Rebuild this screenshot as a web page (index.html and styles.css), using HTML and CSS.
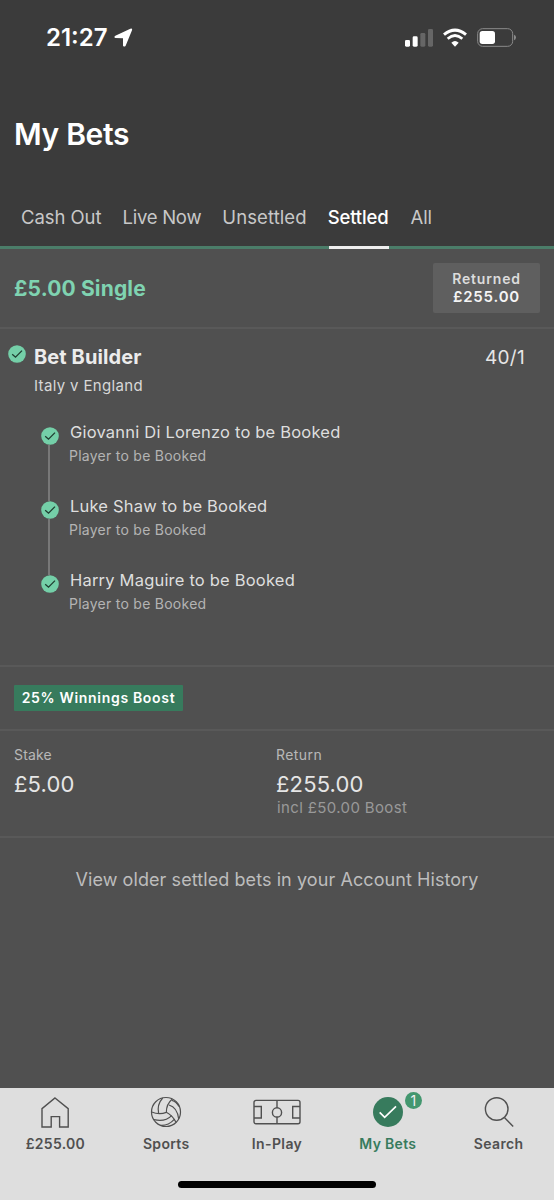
FILE: index.html
```html
<!DOCTYPE html>
<html lang="en">
<head>
    <meta charset="UTF-8">
    <meta name="viewport" content="width=device-width, initial-scale=1.0">
    <title>My Bets</title>
    <link rel="stylesheet" href="styles.css">
</head>
<body>
    <svg class="defs" width="0" height="0">
        <symbol id="check" viewBox="0 0 18 18">
            <circle cx="9" cy="9" r="8.8" fill="#74cfa8"/>
            <path d="M4.2 9.2 L7.5 12.2 L14 5.6" fill="none" stroke="#1f3d30" stroke-width="1.3"/>
        </symbol>
    </svg>

    <header class="header">
        <div class="status-bar">
            <span class="time">21:27</span>
            <svg class="location" width="19" height="19" viewBox="0 0 57 57">
                <path d="M4 23 L49 2 Q56 0 54 7 L35 53 Q31 58 27 53 L27 31 L4 30 Q-2 27 4 23 Z" fill="#fff"/>
            </svg>
            <div class="status-icons">
                <svg width="28" height="19" viewBox="0 0 84 57">
                    <rect x="0" y="36" width="15" height="20" rx="4" fill="#fff"/>
                    <rect x="23" y="25" width="15" height="31" rx="4" fill="#fff"/>
                    <rect x="46" y="15" width="15" height="41" rx="4" fill="#666"/>
                    <rect x="69" y="3" width="15" height="53" rx="4" fill="#666"/>
                </svg>
                <svg width="24" height="19" viewBox="0 0 72 57">
                    <path d="M3 20 Q36 -7 69 20" fill="none" stroke="#fff" stroke-width="9"/>
                    <path d="M14 32 Q36 13 58 32" fill="none" stroke="#fff" stroke-width="8"/>
                    <path d="M25 44 Q36 34 47 44 L36 56 Z" fill="#fff"/>
                </svg>
                <svg width="39" height="19" viewBox="0 0 117 57">
                    <rect x="2" y="2" width="105" height="53" rx="15" fill="none" stroke="#8a8a8a" stroke-width="3"/>
                    <rect x="8" y="9" width="46" height="39" rx="8" fill="#fff"/>
                    <path d="M111 20 Q117 22 117 28 Q117 35 111 37 Z" fill="#8a8a8a"/>
                </svg>
            </div>
        </div>
        <h1>My Bets</h1>
        <nav class="tabs">
            <a class="tab">Cash Out</a>
            <a class="tab tight">Live Now</a>
            <a class="tab wide">Unsettled</a>
            <a class="tab active">Settled</a>
            <a class="tab">All</a>
        </nav>
    </header>

    <main>
        <section class="bet-header">
            <h2>£5.00 Single</h2>
            <div class="returned">
                <div class="returned-label">Returned</div>
                <div class="returned-value">£255.00</div>
            </div>
        </section>

        <section class="selection">
            <div class="selection-head">
                <svg class="check"><use href="#check"/></svg>
                <div class="selection-name">
                    <h3>Bet Builder</h3>
                    <p>Italy v England</p>
                </div>
                <span class="odds">40/1</span>
            </div>
            <ul class="legs">
                <li class="leg">
                    <div class="marker"><svg class="check"><use href="#check"/></svg></div>
                    <div class="leg-text">
                        <div class="leg-title">Giovanni Di Lorenzo to be Booked</div>
                        <div class="leg-market">Player to be Booked</div>
                    </div>
                </li>
                <li class="leg">
                    <div class="marker"><svg class="check"><use href="#check"/></svg></div>
                    <div class="leg-text">
                        <div class="leg-title">Luke Shaw to be Booked</div>
                        <div class="leg-market">Player to be Booked</div>
                    </div>
                </li>
                <li class="leg">
                    <div class="marker"><svg class="check"><use href="#check"/></svg></div>
                    <div class="leg-text">
                        <div class="leg-title">Harry Maguire to be Booked</div>
                        <div class="leg-market">Player to be Booked</div>
                    </div>
                </li>
            </ul>
        </section>

        <section class="boost">
            <span class="boost-badge">25% Winnings Boost</span>
        </section>

        <section class="totals">
            <div>
                <div class="total-label">Stake</div>
                <div class="total-value">£5.00</div>
            </div>
            <div>
                <div class="total-label wide">Return</div>
                <div class="total-value">£255.00</div>
                <div class="total-note">incl £50.00 Boost</div>
            </div>
        </section>

        <p class="history">View older settled bets in your Account History</p>
    </main>

    <footer class="bottom-nav">
        <div class="nav-items">
            <a class="nav-item">
                <span class="nav-icon">
                    <svg width="28" height="32" viewBox="0 0 28 32">
                        <path d="M14 2 L27.2 12.7 V31 H18.6 V20.6 H10.2 V31 H1 V12.7 Z"/>
                    </svg>
                </span>
                <span class="nav-label">£255.00</span>
            </a>
            <a class="nav-item">
                <span class="nav-icon">
                    <svg width="32" height="32" viewBox="0 0 96 96">
                        <g stroke-width="3.6">
                            <circle cx="48" cy="48" r="43.5"/>
                            <path d="M5 48 Q28 57 49 49 Q49 24 67 9"/>
                            <path d="M26 53 Q20 26 38 6"/>
                            <path d="M49 49 Q68 59 78 79"/>
                            <path d="M57 27 Q82 34 86 69"/>
                            <path d="M66 13 Q79 17 87 31"/>
                            <path d="M12 71 Q45 79 65 59"/>
                            <path d="M31 88 Q54 90 73 70"/>
                        </g>
                    </svg>
                </span>
                <span class="nav-label">Sports</span>
            </a>
            <a class="nav-item">
                <span class="nav-icon">
                    <svg width="48" height="26" viewBox="0 0 48 26">
                        <rect x="1" y="1.4" width="46" height="23.4" rx="2"/>
                        <path d="M24 1.4 V8.7 M24 18.1 V24.8"/>
                        <circle cx="24" cy="13.4" r="4.6"/>
                        <path d="M1 7.5 H8.3 V19 H1 M47 7.5 H39.7 V19 H47"/>
                    </svg>
                </span>
                <span class="nav-label wide">In-Play</span>
            </a>
            <a class="nav-item active">
                <span class="nav-icon">
                    <svg width="30" height="30" viewBox="0 0 90 90">
                        <circle class="disc" cx="45" cy="45" r="45"/>
                        <path class="tick" d="M20 46 L35 61 L69 28"/>
                    </svg>
                    <span class="nav-count">1</span>
                </span>
                <span class="nav-label">My Bets</span>
            </a>
            <a class="nav-item">
                <span class="nav-icon">
                    <svg width="30" height="32" viewBox="0 0 30 32">
                        <circle cx="12.7" cy="13" r="11.3"/>
                        <path d="M20.4 21.4 L29.2 30.6"/>
                    </svg>
                </span>
                <span class="nav-label wide">Search</span>
            </a>
        </div>
        <div class="home-indicator"></div>
    </footer>
</body>
</html>
```
FILE: styles.css
```css
* {
    box-sizing: border-box;
}

body {
    display: flex;
    flex-direction: column;
    height: 1200px;
    margin: 0;
    background-color: #505050;
    color: #e6e6e6;
    font-family: Inter, "Liberation Sans", sans-serif;
}

h1, h2, h3, p, ul {
    margin: 0;
    padding: 0;
    font-weight: 400;
}

svg {
    display: block;
}

.defs {
    position: absolute;
}

.header {
    height: 249px;
    background-color: #3b3b3b;
    border-bottom: 3px solid #4b7d69;
}

.status-bar {
    display: flex;
    align-items: center;
    height: 74px;
    padding: 0 38px 0 46px;
    color: #fff;
}

.time {
    padding-top: 1px;
    font-size: 24px;
    font-weight: 600;
    line-height: 30px;
}

.location {
    margin-left: 6px;
}

.status-icons {
    display: flex;
    gap: 10px;
    margin-left: auto;
}

h1 {
    height: 114px;
    padding: 7px 0 0 14px;
    color: #fff;
    font-size: 30px;
    font-weight: 600;
    line-height: 107px;
    letter-spacing: -0.33px;
}

.tabs {
    display: flex;
    gap: 21px;
    padding-left: 21px;
}

.tab {
    color: #c8c8c8;
    font-size: 18.5px;
    line-height: 58px;
    letter-spacing: -0.06px;
}

.tab.tight {
    letter-spacing: -0.25px;
}

.tab.wide {
    letter-spacing: 0.1px;
}

.tab.active {
    position: relative;
    margin-right: 1px;
    color: #fff;
    font-weight: 500;
    letter-spacing: -0.16px;
}

.tab.active::after {
    content: "";
    position: absolute;
    right: -1px;
    bottom: -3px;
    left: 1px;
    height: 3px;
    background-color: #eee;
}

.bet-header {
    display: flex;
    align-items: center;
    justify-content: space-between;
    height: 80px;
    padding: 0 14px;
    border-bottom: 2px solid #595959;
}

h2 {
    color: #7fd3b1;
    font-size: 21px;
    font-weight: 700;
    letter-spacing: 0.15px;
}

.returned {
    width: 107px;
    height: 50px;
    padding-top: 7px;
    border-radius: 2px;
    background-color: #5f5f5f;
    text-align: center;
    font-weight: 600;
    line-height: 18px;
    letter-spacing: 0.82px;
}

.returned-label {
    color: #dcdcdc;
    font-size: 14px;
}

.returned-value {
    color: #f4f4f4;
    font-size: 15px;
}

.selection {
    height: 338px;
    padding-top: 14px;
    border-bottom: 2px solid #595959;
}

.selection-head {
    display: flex;
    padding: 0 29px 0 8px;
}

.check {
    width: 18px;
    height: 18px;
}

.selection-head .check {
    margin-top: 2px;
}

.selection-name {
    flex: 1;
    margin-left: 8px;
}

h3 {
    color: #ececec;
    font-size: 20px;
    font-weight: 700;
    line-height: 28px;
    letter-spacing: 0.1px;
}

.selection-name p {
    margin-top: 4px;
    color: #d8d8d8;
    font-size: 15px;
    line-height: 22px;
    letter-spacing: 0.35px;
}

.odds {
    font-size: 19px;
    line-height: 29px;
    letter-spacing: 0.3px;
}

.legs {
    padding: 30px 0 0 40px;
    list-style: none;
}

.leg {
    display: flex;
    height: 74px;
}

.marker {
    display: flex;
    flex-direction: column;
    align-items: center;
    width: 19px;
}

.leg:not(:last-child) .marker::after {
    content: "";
    flex: 1;
    width: 2px;
    margin-right: 1px;
    background-color: #787878;
}

.leg-text {
    margin: -7px 0 0 10px;
}

.leg-title {
    padding-left: 1px;
    color: #dedede;
    font-size: 16.5px;
    line-height: 24px;
    letter-spacing: 0.2px;
}

.leg-market {
    color: #b4b4b4;
    font-size: 14px;
    line-height: 23px;
    letter-spacing: 0.26px;
}

.boost {
    display: flex;
    align-items: center;
    height: 64px;
    padding-left: 14px;
    border-bottom: 2px solid #595959;
}

.boost-badge {
    width: 169px;
    border-radius: 1px;
    background-color: #377b5d;
    color: #fff;
    font-size: 14px;
    font-weight: 600;
    line-height: 26px;
    letter-spacing: 0.68px;
    text-align: center;
}

.totals {
    display: grid;
    grid-template-columns: 262px 1fr;
    height: 107px;
    padding: 13px 0 0 14px;
    border-bottom: 2px solid #595959;
}

.total-label {
    color: #b8b8b8;
    font-size: 14px;
    line-height: 21px;
    letter-spacing: 0.16px;
}

.total-label.wide {
    letter-spacing: 0.44px;
}

.total-value {
    margin-top: 4px;
    font-size: 22px;
    line-height: 30px;
    letter-spacing: 0.15px;
}

.total-note {
    padding-left: 1px;
    color: #999;
    font-size: 15px;
    line-height: 18px;
    letter-spacing: 0.37px;
}

.history {
    color: #bdbdbd;
    font-size: 18px;
    line-height: 84px;
    letter-spacing: 0.08px;
    text-align: center;
}

.bottom-nav {
    height: 112px;
    margin-top: auto;
    background-color: #dedede;
}

.nav-items {
    display: grid;
    grid-template-columns: repeat(5, 1fr);
    height: 93px;
}

.nav-item {
    display: flex;
    flex-direction: column;
    align-items: center;
    color: #505050;
}

.nav-icon {
    position: relative;
    display: flex;
    align-items: center;
    height: 48px;
}

.nav-icon svg {
    fill: none;
    stroke: #505050;
    stroke-width: 1.4;
}

.nav-icon .disc {
    fill: #377b5d;
    stroke: none;
}

.nav-icon .tick {
    stroke: #fff;
    stroke-width: 5;
}

.nav-count {
    position: absolute;
    top: 4px;
    right: -19px;
    width: 17px;
    height: 17px;
    border-radius: 50%;
    background-color: #43976f;
    color: #f0f0f0;
    font-size: 14px;
    line-height: 17px;
    text-align: center;
}

.nav-label {
    font-size: 14px;
    font-weight: 600;
    line-height: 15px;
    letter-spacing: 0.3px;
}

.nav-label.wide {
    letter-spacing: 0.4px;
}

.nav-item.active .nav-label {
    color: #377b5d;
}

.home-indicator {
    width: 198px;
    height: 7px;
    margin: 0 auto;
    border-radius: 4px;
    background-color: #000;
}
```
